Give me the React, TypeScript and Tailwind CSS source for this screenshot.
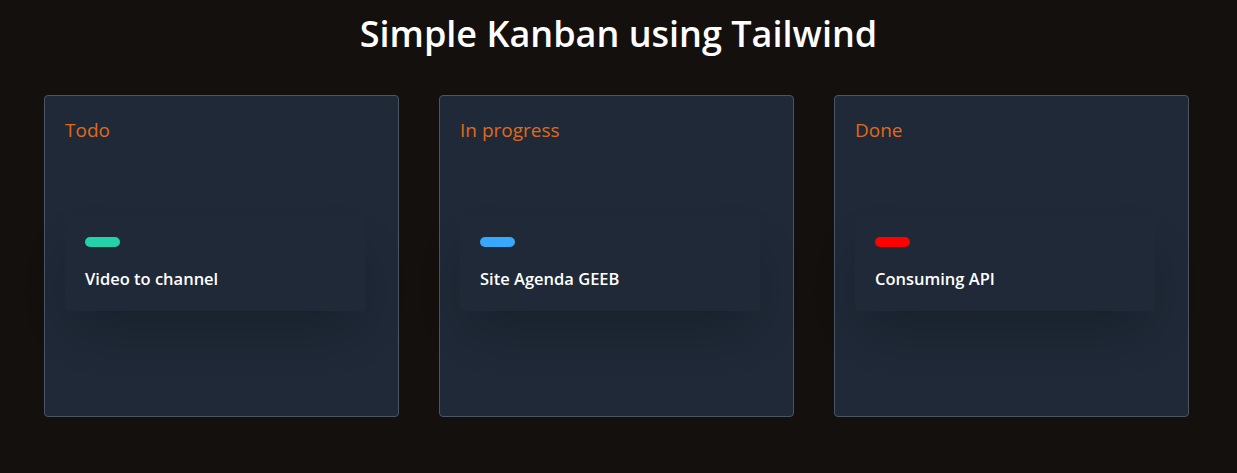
import React from "react";

const columns = [
  { title: "Todo", task: "Video to channel", color: "bg-[#22d3aa]" },
  { title: "In progress", task: "Site Agenda GEEB", color: "bg-[#38a8fc]" },
  { title: "Done", task: "Consuming API", color: "bg-[#ff0000]" },
];

export default function App() {
  return (
    <div
      className="min-h-[473px] w-full bg-[#13100e] text-white"
      style={{ fontFamily: "'Open Sans', 'Noto Sans', sans-serif" }}
    >
      <h1 className="pt-[12px] text-center text-[36px] leading-[44px] font-semibold">
        Simple Kanban using Tailwind
      </h1>
      <div className="mt-[39px] flex gap-[40px] pl-[44px]">
        {columns.map((c) => (
          <div
            key={c.title}
            className="h-[322px] w-[355px] rounded border border-[#4b5563] bg-[#1f2937] p-5"
          >
            <h2 className="text-[19px] leading-7 text-[#e06a17]">{c.title}</h2>
            <div className="mt-[73px] w-[300px] rounded bg-[#1f2937] p-5 shadow-2xl">
              <div className={`h-[10px] w-[35px] rounded-full ${c.color}`} />
              <p className="mt-5 text-[16.5px] leading-6 font-semibold">{c.task}</p>
            </div>
          </div>
        ))}
      </div>
    </div>
  );
}
